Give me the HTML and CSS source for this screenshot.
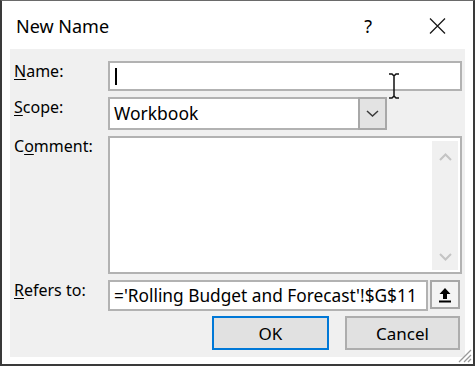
FILE: index.html
```html
<!DOCTYPE html>
<html lang="en">
<head>
    <meta charset="UTF-8">
    <meta name="viewport" content="width=device-width, initial-scale=1.0">
    <title>New Name</title>
    <link rel="stylesheet" href="styles.css">
</head>
<body>
    <div class="window">
        <div class="titlebar">
            <span class="title">New Name</span>
            <span class="help">?</span>
            <svg class="close" width="17" height="16" viewBox="0 0 17 16">
                <path d="M1 0.5 L16 15.5 M16 0.5 L1 15.5" stroke="#1a1a1a" stroke-width="1.3" fill="none"/>
            </svg>
        </div>
        <div class="panel">
            <div class="form">
                <label class="label"><u>N</u>ame:</label>
                <div class="field name-field"><span class="caret"></span></div>

                <label class="label"><u>S</u>cope:</label>
                <div class="select">
                    <span class="select-text">Workbook</span>
                    <span class="select-btn">
                        <svg width="13" height="7" viewBox="0 0 13 7">
                            <path d="M1 1 L6.5 6 L12 1" stroke="#3a3a3a" stroke-width="1.5" fill="none"/>
                        </svg>
                    </span>
                </div>

                <label class="label">C<u>o</u>mment:</label>
                <div class="field comment-field">
                    <div class="scrollbar">
                        <svg width="13" height="8" viewBox="0 0 13 8">
                            <path d="M1 7 L6.5 1.5 L12 7" stroke="#c4c4c4" stroke-width="2" fill="none"/>
                        </svg>
                        <svg width="13" height="8" viewBox="0 0 13 8">
                            <path d="M1 1 L6.5 6.5 L12 1" stroke="#c4c4c4" stroke-width="2" fill="none"/>
                        </svg>
                    </div>
                </div>

                <label class="label"><u>R</u>efers to:</label>
                <div class="refers">
                    <div class="field refers-field">='Rolling Budget and Forecast'!$G$11</div>
                    <span class="collapse-btn">
                        <svg width="14" height="16" viewBox="0 0 14 16">
                            <path d="M7 1 L1.5 7 L5 7 L5 12 L9 12 L9 7 L12.5 7 Z" fill="#000"/>
                            <rect x="1" y="13.5" width="12" height="2" fill="#000"/>
                        </svg>
                    </span>
                </div>

                <div class="buttons">
                    <button class="btn btn-default">OK</button>
                    <button class="btn">Cancel</button>
                </div>
            </div>
        </div>

        <svg class="ibeam" width="12" height="26" viewBox="0 0 12 26">
            <path d="M1 1 L4 1 L6 3 L8 1 L11 1 M6 3 L6 23 M1 25 L4 25 L6 23 L8 25 L11 25" stroke="#111" stroke-width="1.5" fill="none"/>
        </svg>
        <svg class="grip" width="16" height="16" viewBox="0 0 16 16">
            <path d="M15 3 L3 15 M15 8 L8 15 M15 12 L12 15" stroke="#9a9a9a" stroke-width="1.3" fill="none"/>
        </svg>
    </div>
</body>
</html>
```

FILE: styles.css
```css
body {
    margin: 0;
    font-family: "Noto Sans", "Open Sans", sans-serif;
    color: #000;
    background: #fff;
}
.window {
    position: relative;
    width: 475px;
    height: 366px;
    box-sizing: border-box;
    border: 2px solid #3a3a3a;
    border-top: 1px solid #6a6a6a;
    background: #fff;
}
.titlebar {
    display: flex;
    align-items: center;
    height: 48px;
    padding: 2px 0 0 14px;
    box-sizing: border-box;
}
.title {
    font-size: 18px;
    flex: 1;
}
.help {
    font-size: 18px;
    margin-right: 57px;
}
.close {
    margin-right: 27px;
}
.panel {
    height: 308px;
    margin: 0 8px;
    padding: 12px 3px 0 4px;
    box-sizing: border-box;
    background: #f0f0f0;
}
.form {
    display: grid;
    grid-template-columns: 94px 1fr;
    grid-template-rows: 30px 33px 138px 30px 34px;
    row-gap: 6px;
}
.label {
    font-size: 16px;
    line-height: 20px;
}
.label u {
    text-underline-offset: 2px;
}
.field {
    box-sizing: border-box;
    border: 2px solid #b2b2b2;
    background: #fff;
    font-size: 16px;
    padding-left: 4px;
}
.name-field {
    display: flex;
    align-items: center;
}
.caret {
    width: 1.5px;
    height: 17px;
    margin-left: 1px;
    background: #000;
}
.select {
    display: flex;
    width: 279px;
    box-sizing: border-box;
    border: 2px solid #b2b2b2;
    background: #fff;
}
.select-text {
    flex: 1;
    font-size: 17.5px;
    line-height: 29px;
    padding-left: 4px;
}
.select-btn {
    display: flex;
    align-items: center;
    justify-content: center;
    width: 25px;
    margin: -2px -2px -2px 0;
    border: 2px solid #a8a8a8;
    background: #e3e3e3;
}
.comment-field {
    display: flex;
    justify-content: flex-end;
    padding: 3px 2px 2px 0;
}
.scrollbar {
    display: flex;
    flex-direction: column;
    justify-content: space-between;
    align-items: center;
    width: 26px;
    padding: 12px 0 9px;
    background: #f0f0f0;
}
.refers {
    display: flex;
    gap: 2px;
    margin-right: 2px;
}
.refers-field {
    flex: 1;
    display: flex;
    align-items: center;
    height: 31px;
    font-size: 17.3px;
}
.collapse-btn {
    display: flex;
    align-items: center;
    justify-content: center;
    width: 30px;
    height: 29px;
    box-sizing: border-box;
    border: 2px solid #a8a8a8;
    background: #f4f4f4;
}
.buttons {
    grid-column: 2;
    display: flex;
    justify-content: flex-end;
    gap: 16px;
    margin-right: 2px;
}
.btn {
    width: 115px;
    height: 34px;
    border: 2px solid #adadad;
    background: #e1e1e1;
    font-family: inherit;
    font-size: 17px;
    color: #000;
    padding: 0;
}
.btn-default {
    width: 117px;
    border-color: #0078d7;
}
.ibeam {
    position: absolute;
    left: 386px;
    top: 72px;
}
.grip {
    position: absolute;
    right: 1px;
    bottom: 1px;
}
```
